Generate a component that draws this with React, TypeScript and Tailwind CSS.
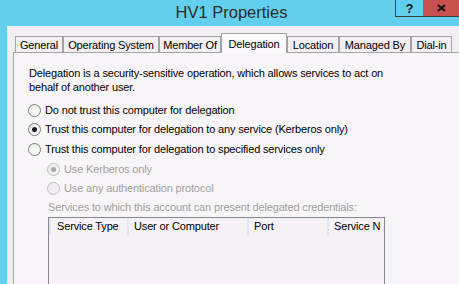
import React from "react";

const font = { fontFamily: '"Liberation Sans", Arial, sans-serif' };

function Radio({ checked, disabled }: { checked?: boolean; disabled?: boolean }) {
  return (
    <span
      className={
        "relative inline-flex items-center justify-center w-[13px] h-[13px] rounded-full border shrink-0 " +
        (disabled
          ? "border-[#bcbcbc] bg-[#f1eef1]"
          : "border-[#7c7c7c] bg-gradient-to-b from-[#ececec] to-[#ffffff]")
      }
    >
      {checked && (
        <span
          className={
            "w-[5px] h-[5px] rounded-full " + (disabled ? "bg-[#a8a8a8]" : "bg-[#1e1e1e]")
          }
        />
      )}
    </span>
  );
}

const tabs = [
  { label: "General", w: "w-[48px]" },
  { label: "Operating System", w: "w-[96px]" },
  { label: "Member Of", w: "w-[62px]" },
  { label: "Delegation", w: "w-[66px]", sel: true },
  { label: "Location", w: "w-[52px]" },
  { label: "Managed By", w: "w-[72px]" },
  { label: "Dial-in", w: "w-[41px]" },
];

export default function App() {
  return (
    <div
      className="w-[459px] h-[284px] overflow-hidden bg-[#62cfee] flex flex-col text-[11px] text-black"
      style={font}
    >
      {/* Title bar */}
      <div className="relative h-[26px] shrink-0 flex items-center justify-center">
        <span className="text-[16.5px] text-[#2b2b2b] ml-[4px] -mt-[2px]">HV1 Properties</span>
        <div className="absolute top-0 right-0 flex">
          <div className="w-[28px] h-[17px] border-l border-b border-[#3a3a3a] flex items-center justify-center font-bold text-[13px] text-[#111] leading-none">
            ?
          </div>
          <div className="w-[36px] h-[17px] bg-[#c75050] border-b border-[#3a3a3a] flex items-center justify-center">
            <svg width="9" height="8" viewBox="0 0 9 8">
              <path d="M1 1 L8 7 M8 1 L1 7" stroke="#111" strokeWidth="2" />
            </svg>
          </div>
        </div>
      </div>

      {/* Client area */}
      <div className="ml-[7px] flex-1 bg-[#f2eef2] pl-[6px] pt-[7px] flex flex-col tracking-[-0.15px]">
        {/* Tab strip */}
        <div className="flex items-end h-[19px] pl-[2px] relative z-10">
          {tabs.map((t) =>
            t.sel ? (
              <div
                key={t.label}
                className={
                  t.w +
                  " h-[20px] -mb-px bg-[#fbf9fb] border-t border-l border-r border-[#a3a3a3] flex items-start justify-center pt-[2px]"
                }
              >
                {t.label}
              </div>
            ) : (
              <div
                key={t.label}
                className={
                  t.w +
                  " h-[16px] bg-[#f2eef2] border-t border-l border-r border-[#a3a3a3] flex items-center justify-center pt-px"
                }
              >
                {t.label}
              </div>
            )
          )}
        </div>

        {/* Panel */}
        <div className="flex-1 bg-[#f8f5f8] border-l border-t border-[#a3a3a3] pl-[15px] pt-[13px] w-[470px]">
          <p className="leading-[14px] w-[370px]">
            Delegation is a security-sensitive operation, which allows services to act on
            <br />
            behalf of another user.
          </p>

          <div className="mt-[6px] flex flex-col">
            <div className="h-[20px] flex items-center gap-[4px] -ml-px">
              <Radio />
              <span>Do not trust this computer for delegation</span>
            </div>
            <div className="h-[19px] flex items-center gap-[4px] -ml-px">
              <Radio checked />
              <span>Trust this computer for delegation to any service (Kerberos only)</span>
            </div>
            <div className="h-[20px] flex items-center gap-[4px] -ml-px">
              <Radio />
              <span>Trust this computer for delegation to specified services only</span>
            </div>
            <div className="h-[20px] flex items-center gap-[4px] ml-[18px] text-[#a0a0a0]">
              <Radio checked disabled />
              <span>Use Kerberos only</span>
            </div>
            <div className="h-[19px] flex items-center gap-[4px] ml-[18px] text-[#a0a0a0]">
              <Radio disabled />
              <span>Use any authentication protocol</span>
            </div>
            <div className="h-[19px] flex items-center ml-[19px] text-[#a0a0a0]">
              Services to which this account can present delegated credentials:
            </div>
          </div>

          {/* List view */}
          <div className="ml-[19px] w-[337px] h-[80px] border border-[#828790] bg-[#f6f2f6] flex flex-col">
            <div className="flex h-[17px] shrink-0">
              <div className="w-[80px] border-l-2 border-r-2 border-[#dee7f2] flex items-center pl-[6px]">
                Service Type
              </div>
              <div className="w-[120px] border-r-2 border-[#dee7f2] flex items-center pl-[5px]">
                User or Computer
              </div>
              <div className="w-[80px] border-r-2 border-[#dee7f2] flex items-center pl-[5px]">
                Port
              </div>
              <div className="flex-1 flex items-center pl-[5px] overflow-hidden whitespace-nowrap">
                Service N
              </div>
            </div>
          </div>
        </div>
      </div>
    </div>
  );
}
